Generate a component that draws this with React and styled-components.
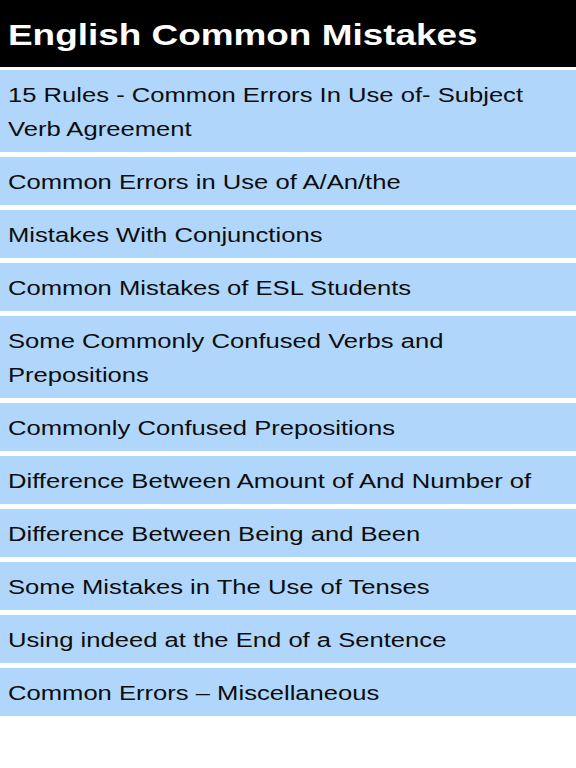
import React from 'react';
import styled, { createGlobalStyle } from 'styled-components';

const GlobalStyle = createGlobalStyle`
  body {
    margin: 0;
    background: #ffffff;
    font-family: 'Liberation Sans', Arial, sans-serif;
  }
`;

const Page = styled.main`
  display: flex;
  flex-direction: column;
  width: 576px;
  min-height: 768px;
  background: #ffffff;
`;

const Header = styled.header`
  display: flex;
  align-items: center;
  height: 67px;
  padding: 2px 8px 0;
  box-sizing: border-box;
  background: #000000;
`;

const Title = styled.h1`
  margin: 0;
  width: calc(100% / 1.23);
  transform: scaleX(1.23);
  transform-origin: left center;
  color: #ffffff;
  font-size: 30px;
  font-weight: bold;
  white-space: nowrap;
`;

const List = styled.ul`
  display: flex;
  flex-direction: column;
  gap: 5px;
  margin: 3px 0 0;
  padding: 0;
  list-style: none;
`;

const Item = styled.li`
  padding: 8px 8px 6px;
  background: #b0d7fb;
  cursor: pointer;
  &:hover {
    background: #9ccbf5;
  }
`;

const ItemText = styled.span`
  display: block;
  width: calc(100% / 1.28);
  transform: scaleX(1.28);
  transform-origin: left top;
  color: #0d0d0d;
  font-size: 20px;
  line-height: 34px;
`;

const topics = [
  '15 Rules - Common Errors In Use of- Subject Verb Agreement',
  'Common Errors in Use of A/An/the',
  'Mistakes With Conjunctions',
  'Common Mistakes of ESL Students',
  'Some Commonly Confused Verbs and Prepositions',
  'Commonly Confused Prepositions',
  'Difference Between Amount of And Number of',
  'Difference Between Being and Been',
  'Some Mistakes in The Use of Tenses',
  'Using indeed at the End of a Sentence',
  'Common Errors \u2013 Miscellaneous',
];

export default function App() {
  return (
    <>
      <GlobalStyle />
      <Page>
        <Header>
          <Title>English Common Mistakes</Title>
        </Header>
        <List>
          {topics.map((topic, i) => (
            <Item key={i}>
              <ItemText>{topic}</ItemText>
            </Item>
          ))}
        </List>
      </Page>
    </>
  );
}
